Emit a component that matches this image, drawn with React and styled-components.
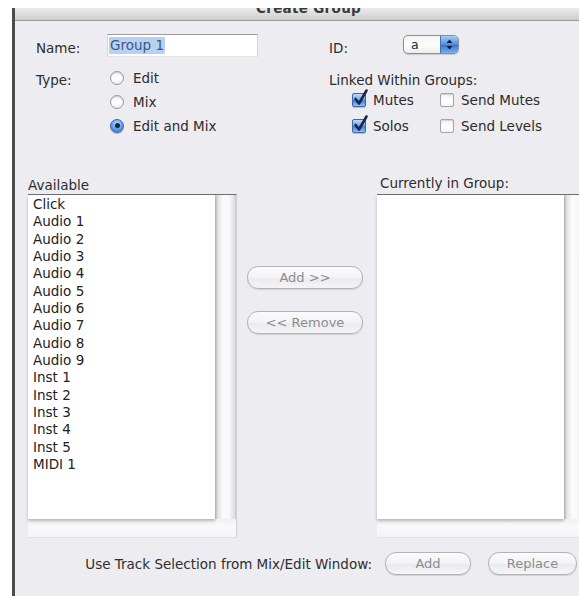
import React from 'react';
import styled, { createGlobalStyle } from 'styled-components';

const Global = createGlobalStyle`
  html, body { margin: 0; padding: 0; background: #fff; }
  body {
    font-family: "DejaVu Sans", "Liberation Sans", sans-serif;
    font-size: 13.5px;
    color: #2b2b2b;
  }
  #root { width: 579px; height: 596px; overflow: hidden; }
`;

const Page = styled.div`
  width: 579px;
  height: 596px;
  overflow: hidden;
  background: #fff;
  padding: 8px 0 0 12px;
  box-sizing: border-box;
`;

const Window = styled.div`
  width: 620px;
  height: 100%;
  border-left: 3px solid #4c4c4e;
  background: #edecf0;
  display: flex;
  flex-direction: column;
`;

const TitleBar = styled.div`
  height: 13px;
  flex-shrink: 0;
  box-sizing: border-box;
  overflow: hidden;
  background: linear-gradient(#ececec, #cdcdcd);
  border-bottom: 1px solid #9a9a9a;
  display: flex;
  align-items: flex-start;
  padding-left: 241px;
`;

const TitleText = styled.span`
  font-weight: bold;
  font-size: 13.5px;
  line-height: 15px;
  margin-top: -7px;
  color: #3a3a3a;
  letter-spacing: 0.3px;
`;

const Content = styled.div`
  flex: 1;
  padding: 13px 0 0 13px;
  display: flex;
  flex-direction: column;
`;

const TopSection = styled.div`
  display: flex;
  padding-left: 8px;
`;

const LeftForm = styled.div`
  width: 293px;
  display: grid;
  grid-template-columns: 71px auto;
  row-gap: 10px;
  align-items: start;
`;

const Label = styled.div`
  line-height: 16px;
  margin-top: ${p => p.$top || 0}px;
  color: #2e2e2e;
`;

const TextField = styled.div`
  width: 151px;
  height: 23px;
  box-sizing: border-box;
  background: #fff;
  border-top: 1px solid #9c9ca0;
  border-left: 1px solid #d6d6da;
  border-right: 1px solid #d6d6da;
  border-bottom: 1px solid #e4e4e8;
  padding: 2px 0 0 1px;
`;

const Selected = styled.span`
  display: inline-block;
  background: #b9d1f1;
  color: #3b5686;
  line-height: 17px;
  padding: 0 1px;
`;

const RadioGroup = styled.div`
  display: flex;
  flex-direction: column;
  margin-top: -3px;
`;

const RadioRow = styled.div`
  height: 24px;
  display: flex;
  align-items: center;
  gap: 9px;
  padding-left: 3px;
`;

const RadioCircle = styled.span`
  width: 14px;
  height: 14px;
  border-radius: 50%;
  box-sizing: border-box;
  display: flex;
  align-items: center;
  justify-content: center;
  border: 1px solid ${p => (p.$on ? '#3f66a8' : '#9a9a9e')};
  background: ${p =>
    p.$on
      ? 'radial-gradient(circle at 50% 30%, #bcdcff 0, #6aa4ee 45%, #2f6cc8 100%)'
      : 'linear-gradient(#f4f4f4, #ffffff 60%, #e9e9ec)'};
  box-shadow: ${p => (p.$on ? '0 1px 1px rgba(0,0,0,0.25)' : 'inset 0 1px 1px rgba(0,0,0,0.15)')};
  &::after {
    content: '';
    display: ${p => (p.$on ? 'block' : 'none')};
    width: 5px;
    height: 5px;
    border-radius: 50%;
    background: #17223a;
  }
`;

const RightForm = styled.div`
  display: flex;
  flex-direction: column;
`;

const IdRow = styled.div`
  display: flex;
  align-items: flex-start;
  height: 23px;
`;

const IdLabel = styled.div`
  width: 74px;
  line-height: 16px;
  margin-top: 6px;
`;

const Popup = styled.div`
  width: 56px;
  height: 19px;
  margin-top: 1px;
  box-sizing: border-box;
  border: 1px solid #8d8d92;
  border-radius: 5px;
  background: linear-gradient(#f3f3f3, #ffffff 55%, #ececee);
  display: flex;
  overflow: hidden;
  box-shadow: 0 1px 1px rgba(0,0,0,0.15);
`;

const PopupValue = styled.div`
  flex: 1;
  padding-left: 7px;
  line-height: 18px;
  font-size: 12.5px;
`;

const PopupArrows = styled.div`
  width: 17px;
  background: linear-gradient(#a8cdf6, #4f8fe0 50%, #2f6fcf 51%, #78b2f2);
  border-left: 1px solid #4a6fae;
  display: flex;
  align-items: center;
  justify-content: center;
`;

const LinkedLabel = styled.div`
  line-height: 16px;
  margin-top: 15px;
`;

const CheckGrid = styled.div`
  display: grid;
  grid-template-columns: 88px auto;
  grid-auto-rows: 26px;
  padding-left: 23px;
  margin-top: -1px;
`;

const CheckItem = styled.div`
  display: flex;
  align-items: center;
  gap: 7px;
`;

const CheckBox = styled.span`
  position: relative;
  width: 14px;
  height: 14px;
  box-sizing: border-box;
  border-radius: 2px;
  border: 1px solid ${p => (p.$on ? '#3f66a8' : '#a3a3a8')};
  background: ${p =>
    p.$on
      ? 'linear-gradient(#bcdcff, #6aa4ee 50%, #3d7ad6 51%, #8fc0f5)'
      : 'linear-gradient(#f0f0f2, #ffffff 60%, #f4f4f6)'};
  box-shadow: ${p => (p.$on ? '0 1px 1px rgba(0,0,0,0.2)' : 'inset 0 1px 1px rgba(0,0,0,0.12)')};
`;

const CheckMark = styled.svg`
  position: absolute;
  left: 1px;
  top: -4px;
  width: 14px;
  height: 16px;
  overflow: visible;
`;

const Middle = styled.div`
  display: flex;
  align-items: flex-start;
  margin-top: 38px;
`;

const ListColumn = styled.div`
  display: flex;
  flex-direction: column;
`;

const ListLabel = styled.div`
  height: 17px;
  line-height: 16px;
  padding-left: ${p => p.$indent || 0}px;
  margin-top: ${p => p.$up ? -2 : 0}px;
  padding-bottom: ${p => p.$up ? 2 : 0}px;
  color: #2e2e2e;
`;

const Frame = styled.div`
  width: 209px;
  height: 344px;
  box-sizing: border-box;
  display: grid;
  grid-template-columns: 1fr 21px;
  grid-template-rows: 1fr 18px;
  border-top: 1px solid #6e6e72;
  border-right: 1px solid #cfcfd3;
  border-bottom: 1px solid #e2e2e6;
  background: #f6f6f8;
`;

const ListBody = styled.div`
  background: #fff;
  padding: 1px 0 0 5px;
  overflow: hidden;
  position: relative;
  z-index: 1;
  box-shadow: 0 2px 3px rgba(0,0,0,0.25);
`;

const ListItem = styled.div`
  line-height: 17.33px;
  color: #222;
  white-space: nowrap;
`;

const ScrollTrack = styled.div`
  background: linear-gradient(to right, #c2c2c6 0, #e4e4e7 3px, #fbfbfc 8px, #f8f8f9 14px, #e2e2e5 19px, #cbcbcf 21px);
`;

const ScrollStrip = styled.div`
  grid-column: 1 / span 2;
  background: linear-gradient(#f1f1f4, #f9f9fa 40%, #f4f4f6);
`;

const ButtonColumn = styled.div`
  width: 140px;
  box-sizing: border-box;
  padding: 89px 0 0 10px;
  display: flex;
  flex-direction: column;
  gap: 22px;
`;

const PillButton = styled.div`
  width: ${p => p.$w}px;
  height: 23px;
  box-sizing: border-box;
  border: 1px solid #b3b3b8;
  border-radius: 11px;
  background: linear-gradient(#fbfbfc, #f3f3f5 50%, #eaeaed 51%, #f5f5f7);
  color: #8c8c90;
  display: flex;
  align-items: center;
  justify-content: center;
  box-shadow: 0 1px 1px rgba(0,0,0,0.12);
  flex-shrink: 0;
  font-size: 13px;
`;

const BottomRow = styled.div`
  width: 549px;
  margin-top: 14px;
  display: flex;
  align-items: center;
  justify-content: flex-end;
`;

const BottomText = styled.div`
  margin-right: 13px;
  color: #2e2e2e;
  white-space: nowrap;
`;

const ButtonGap = styled.div`
  width: 17px;
`;

const tracks = [
  'Click', 'Audio 1', 'Audio 2', 'Audio 3', 'Audio 4', 'Audio 5', 'Audio 6',
  'Audio 7', 'Audio 8', 'Audio 9', 'Inst 1', 'Inst 2', 'Inst 3', 'Inst 4',
  'Inst 5', 'MIDI 1',
];

function Radio({ on, children }) {
  return (
    <RadioRow>
      <RadioCircle $on={on} />
      <span>{children}</span>
    </RadioRow>
  );
}

function Check({ on, children }) {
  return (
    <CheckItem>
      <CheckBox $on={on}>
        {on && (
          <CheckMark viewBox="0 0 14 16">
            <path d="M1.5 9 L5 13.5 L12.5 0.5" fill="none" stroke="#1c2646" strokeWidth="2.6" strokeLinecap="round" strokeLinejoin="round" />
          </CheckMark>
        )}
      </CheckBox>
      <span>{children}</span>
    </CheckItem>
  );
}

function ListBox({ items }) {
  return (
    <Frame>
      <ListBody>
        {items.map(t => (
          <ListItem key={t}>{t}</ListItem>
        ))}
      </ListBody>
      <ScrollTrack />
      <ScrollStrip />
    </Frame>
  );
}

export default function App() {
  return (
    <>
      <Global />
      <Page>
        <Window>
          <TitleBar>
            <TitleText>Create Group</TitleText>
          </TitleBar>
          <Content>
            <TopSection>
              <LeftForm>
                <Label $top={6}>Name:</Label>
                <TextField>
                  <Selected>Group 1</Selected>
                </TextField>
                <Label $top={3}>Type:</Label>
                <RadioGroup>
                  <Radio>Edit</Radio>
                  <Radio>Mix</Radio>
                  <Radio on>Edit and Mix</Radio>
                </RadioGroup>
              </LeftForm>
              <RightForm>
                <IdRow>
                  <IdLabel>ID:</IdLabel>
                  <Popup>
                    <PopupValue>a</PopupValue>
                    <PopupArrows>
                      <svg width="7" height="11" viewBox="0 0 7 11">
                        <path d="M3.5 0.5 L6.5 4 L0.5 4 Z" fill="#14203c" />
                        <path d="M3.5 10.5 L6.5 7 L0.5 7 Z" fill="#14203c" />
                      </svg>
                    </PopupArrows>
                  </Popup>
                </IdRow>
                <LinkedLabel>Linked Within Groups:</LinkedLabel>
                <CheckGrid>
                  <Check on>Mutes</Check>
                  <Check>Send Mutes</Check>
                  <Check on>Solos</Check>
                  <Check>Send Levels</Check>
                </CheckGrid>
              </RightForm>
            </TopSection>

            <Middle>
              <ListColumn>
                <ListLabel>Available</ListLabel>
                <ListBox items={tracks} />
              </ListColumn>
              <ButtonColumn>
                <PillButton $w={116}>Add &gt;&gt;</PillButton>
                <PillButton $w={116}>&lt;&lt; Remove</PillButton>
              </ButtonColumn>
              <ListColumn>
                <ListLabel $indent={3} $up>Currently in Group:</ListLabel>
                <ListBox items={[]} />
              </ListColumn>
            </Middle>

            <BottomRow>
              <BottomText>Use Track Selection from Mix/Edit Window:</BottomText>
              <PillButton $w={86}>Add</PillButton>
              <ButtonGap />
              <PillButton $w={89}>Replace</PillButton>
            </BottomRow>
          </Content>
        </Window>
      </Page>
    </>
  );
}
